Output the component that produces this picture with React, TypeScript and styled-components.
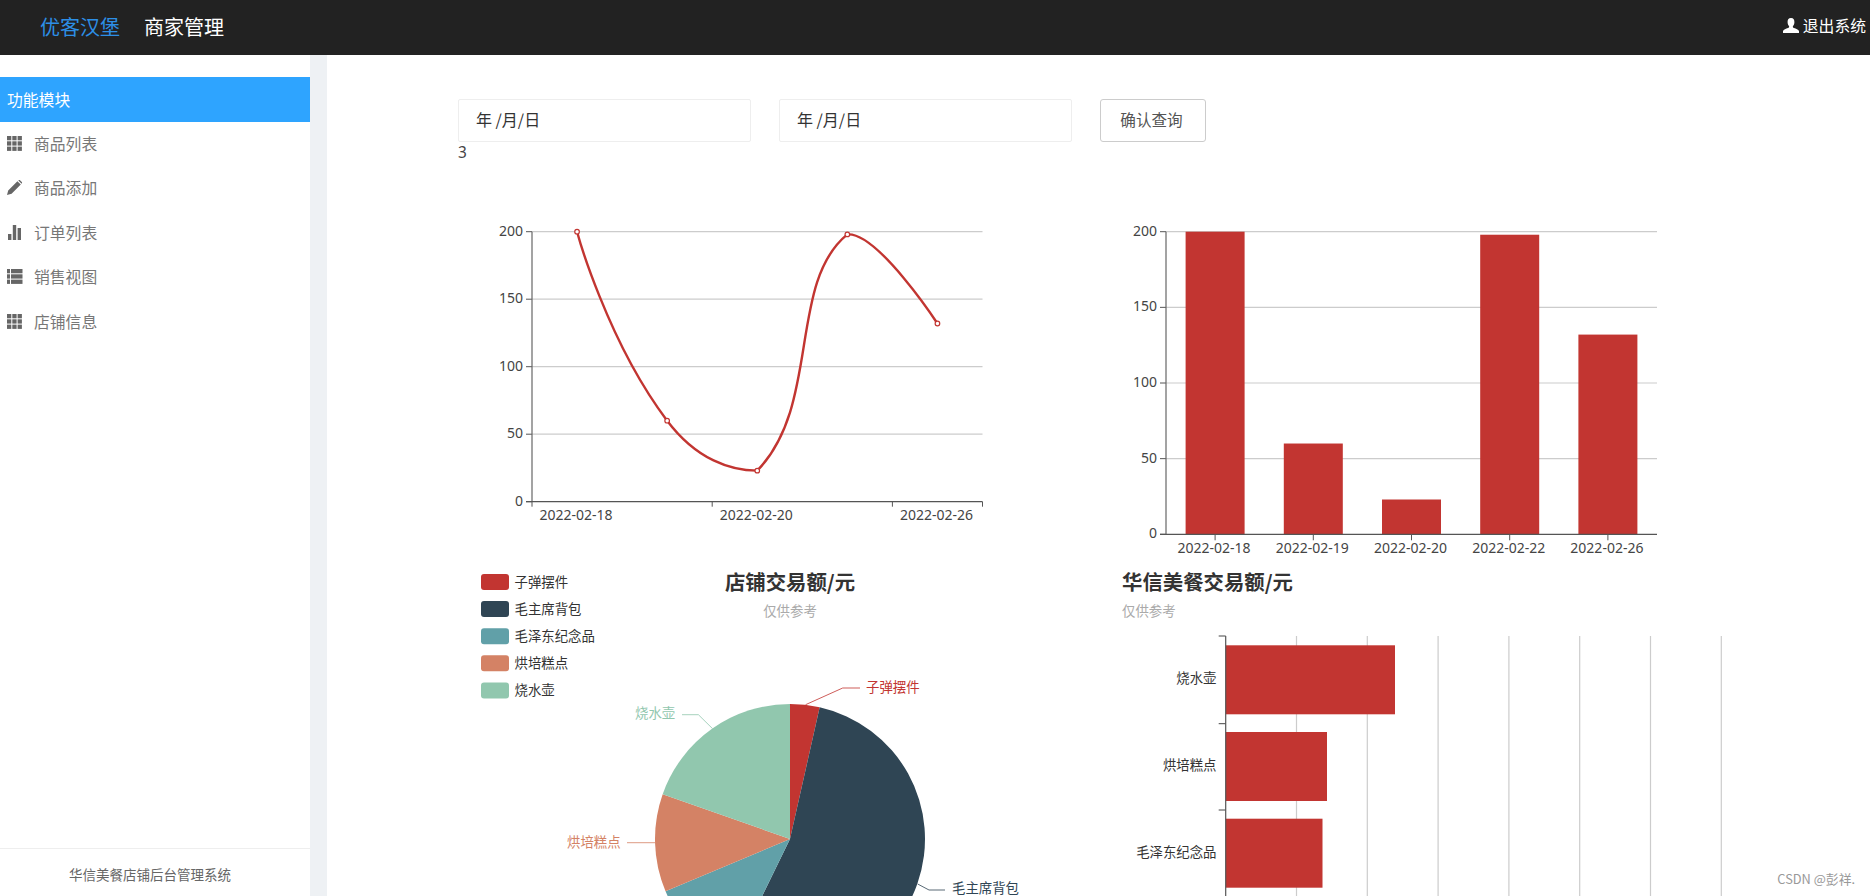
import React from 'react'
import styled, { createGlobalStyle } from 'styled-components'

const FONT = `"Noto Sans CJK SC", "Noto Sans", sans-serif`
const COLORS = ['#c23531', '#2f4554', '#61a0a8', '#d48265', '#91c7ae']

const GlobalStyle = createGlobalStyle`
  html, body {
    margin: 0;
    height: 100%;
    overflow: hidden;
    background: #fff;
    font-family: ${FONT};
  }
`

const Page = styled.div`
  height: 896px;
  display: flex;
  flex-direction: column;
  position: relative;
  overflow: hidden;
`

const Header = styled.header`
  height: 55px;
  flex: none;
  box-sizing: border-box;
  background: #222;
  display: flex;
  align-items: center;
  padding: 0 4px 3px 40px;
`

const Brand = styled.div<{ $accent?: boolean }>`
  font-size: 20px;
  margin-right: 24px;
  color: ${props => (props.$accent ? '#2d8fe6' : '#fff')};
`

const Logout = styled.div`
  margin-left: auto;
  padding-bottom: 2px;
  display: flex;
  align-items: center;
  gap: 4px;
  color: #fff;
  font-size: 15.8px;
`

const Body = styled.div`
  flex: 1;
  display: flex;
  min-height: 0;
`

const Sidebar = styled.aside`
  width: 310px;
  flex: none;
  display: flex;
  flex-direction: column;
  padding-top: 22px;
  box-sizing: border-box;
`

const MenuHead = styled.div`
  height: 45px;
  background: #2ea4ff;
  color: #fff;
  font-size: 15.8px;
  line-height: 45px;
  padding-left: 7px;
`

const MenuItem = styled.div`
  height: 44.5px;
  box-sizing: border-box;
  padding: 0 0 2px 7px;
  display: flex;
  align-items: center;
  gap: 11px;
  color: #777;
  font-size: 15.8px;
`

const SideFooter = styled.div`
  margin-top: auto;
  height: 47px;
  padding-right: 10px;
  border-top: 1px solid #eee;
  color: #666;
  font-size: 13.5px;
  line-height: 50px;
  text-align: center;
`

const Gutter = styled.div`
  width: 17px;
  flex: none;
  background: #eef1f4;
`

const Main = styled.main`
  flex: 1;
  min-width: 0;
  padding: 44px 0 0 131px;
  overflow: hidden;
`

const Toolbar = styled.div`
  display: flex;
  align-items: stretch;
`

const DateInput = styled.input`
  width: 293px;
  height: 43px;
  box-sizing: border-box;
  margin-right: 28px;
  padding: 0 17px 3px;
  border: 1px solid #eee;
  border-radius: 2px;
  outline: none;
  font-family: ${FONT};
  font-size: 16px;
  color: #333;
  background: #fff;
`

const QueryButton = styled.button`
  width: 106px;
  height: 43px;
  border: 1px solid #ccc;
  border-radius: 3px;
  background: #fff;
  color: #555;
  font-family: ${FONT};
  font-size: 15.6px;
  padding: 0 3px 3px 0;
`

const Count = styled.div`
  font-family: "Noto Sans", sans-serif;
  font-size: 15.4px;
  line-height: 22px;
  color: #444;
`

const ChartGrid = styled.div`
  margin-top: 36px;
  display: grid;
  grid-template-columns: 640px 640px;
  grid-template-rows: 360px 340px;
`

const ChartSvg = styled.svg`
  display: block;
  font-family: ${FONT};
`

const Tick = styled.text`
  font-family: "Noto Sans", sans-serif;
  font-size: 14px;
  fill: #444;
`

const Label = styled.text<{ $tone?: string }>`
  font-size: 13.4px;
  fill: ${props => props.$tone || '#333'};
`

const Title = styled.text`
  font-size: 20.4px;
  font-weight: 700;
  fill: #333;
`

const Subtitle = styled.text`
  font-size: 13.4px;
  fill: #aaa;
`

const Watermark = styled.div`
  position: absolute;
  right: 15px;
  bottom: 9px;
  color: #999;
  font-size: 12.8px;
  line-height: 16px;
`

const IconSvg = styled.svg`
  flex: none;
  display: block;
  fill: currentColor;
`

const MenuIcon = styled(IconSvg).attrs({ width: 16, height: 15, viewBox: '0 0 16 15' })`
  color: #666;
`

const GridIcon = () => (
  <MenuIcon>
    {[0, 5.3, 10.6].flatMap(y =>
      [0, 5.3, 10.6].map(x => <rect key={`${x}-${y}`} x={x} y={y} width="4.3" height="4.3" />)
    )}
  </MenuIcon>
)

const PencilIcon = () => (
  <MenuIcon>
    <path d="M0 15 L1.2 10.4 L10.4 1.2 L13.8 4.6 L4.6 13.8 Z M11.3 .4 L12 0 Q12.6-.2 13 .2 L14.8 2 Q15.2 2.4 15 3 L14.6 3.7 Z" />
  </MenuIcon>
)

const StatsIcon = () => (
  <MenuIcon>
    <rect x="1" y="9" width="3.4" height="6" />
    <rect x="5.8" y="0" width="3.4" height="15" />
    <rect x="10.6" y="3" width="3.4" height="12" />
  </MenuIcon>
)

const ListIcon = () => (
  <MenuIcon>
    {[0, 5.3, 10.6].map(y => (
      <g key={y}>
        <rect x="0" y={y} width="3" height="4.3" />
        <rect x="4" y={y} width="11.5" height="4.3" />
      </g>
    ))}
  </MenuIcon>
)

const UserIcon = () => (
  <IconSvg width="16" height="15" viewBox="0 0 16 15">
    <path d="M8 0 C10.6 0 11.6 2 11.4 4.4 C11.3 6 10.6 7.4 9.9 8.2 C9.7 9 10 9.6 11 10 C13 10.8 15.4 11.4 16 13 L16 15 L0 15 L0 13 C.6 11.4 3 10.8 5 10 C6 9.6 6.3 9 6.1 8.2 C5.4 7.4 4.7 6 4.6 4.4 C4.4 2 5.4 0 8 0 Z" />
  </IconSvg>
)

const menu = [
  { text: '商品列表', icon: <GridIcon /> },
  { text: '商品添加', icon: <PencilIcon /> },
  { text: '订单列表', icon: <StatsIcon /> },
  { text: '销售视图', icon: <ListIcon /> },
  { text: '店铺信息', icon: <GridIcon /> },
]

const sales = [
  { date: '2022-02-18', value: 200 },
  { date: '2022-02-19', value: 60 },
  { date: '2022-02-20', value: 23 },
  { date: '2022-02-22', value: 198 },
  { date: '2022-02-26', value: 132 },
]

// same maths as echarts smooth: 0.5, control points kept inside the data range
const smoothPath = (pts: number[][]) => {
  const ys = pts.map(p => p[1])
  const clampY = (y: number) => Math.min(Math.max(y, Math.min(...ys)), Math.max(...ys))
  const cp = pts.map((p, i) => {
    const prev = pts[i - 1]
    const next = pts[i + 1]
    if (!prev || !next) return { before: p, after: p }
    const vx = next[0] - prev[0]
    const vy = next[1] - prev[1]
    const d0 = Math.hypot(p[0] - prev[0], p[1] - prev[1])
    const d1 = Math.hypot(next[0] - p[0], next[1] - p[1])
    const t0 = (0.5 * d0) / (d0 + d1)
    const t1 = (0.5 * d1) / (d0 + d1)
    return {
      before: [p[0] - vx * t0, clampY(p[1] - vy * t0)],
      after: [p[0] + vx * t1, clampY(p[1] + vy * t1)],
    }
  })
  let d = `M${pts[0][0]} ${pts[0][1]}`
  for (let i = 1; i < pts.length; i++) {
    d += ` C${cp[i - 1].after[0]} ${cp[i - 1].after[1]} ${cp[i].before[0]} ${cp[i].before[1]} ${pts[i][0]} ${pts[i][1]}`
  }
  return d
}

const LineChart = () => {
  const left = 532
  const right = 982.5
  const zero = 501.7
  const unit = 1.35
  const step = (right - left) / 5
  const pts = sales.map((s, i) => [left + step * (i + 0.5), zero - s.value * unit])
  return (
    <ChartSvg width="640" height="360" viewBox="458 200 640 360">
      {[0, 50, 100, 150, 200].map(v => {
        const y = zero - v * unit
        return (
          <g key={v}>
            {v > 0 && <line x1={left} x2={right} y1={y} y2={y} stroke="#ccc" strokeWidth="1.2" />}
            <line x1={left - 6} x2={left} y1={y} y2={y} stroke="#555" />
            <Tick x={left - 9} y={y + 4} textAnchor="end">{v}</Tick>
          </g>
        )
      })}
      <line x1={left} x2={left} y1={zero - 200 * unit} y2={zero} stroke="#666" strokeWidth="1.2" />
      <line x1={left - 6} x2={right} y1={zero} y2={zero} stroke="#555" strokeWidth="1.2" />
      {[0, 2, 4, 5].map(n => (
        <line key={n} x1={left + step * n} x2={left + step * n} y1={zero} y2={zero + 5} stroke="#555" />
      ))}
      {[0, 2, 4].map(n => (
        <Tick key={n} x={pts[n][0] - 1} y={zero + 18} textAnchor="middle">{sales[n].date}</Tick>
      ))}
      <path d={smoothPath(pts)} fill="none" stroke={COLORS[0]} strokeWidth="2.4" />
      {pts.map(p => (
        <circle key={p[0]} cx={p[0]} cy={p[1]} r="2.3" fill="#fff" stroke={COLORS[0]} strokeWidth="1.2" />
      ))}
    </ChartSvg>
  )
}

const BarChart = () => {
  const left = 1166
  const right = 1657
  const zero = 534.3
  const unit = 1.513
  const step = (right - left) / 5
  return (
    <ChartSvg width="640" height="360" viewBox="1098 200 640 360">
      {[0, 50, 100, 150, 200].map(v => {
        const y = zero - v * unit
        return (
          <g key={v}>
            {v > 0 && <line x1={left} x2={right} y1={y} y2={y} stroke="#ccc" strokeWidth="1.2" />}
            <line x1={left - 6} x2={left} y1={y} y2={y} stroke="#555" />
            <Tick x={left - 9} y={y + 4} textAnchor="end">{v}</Tick>
          </g>
        )
      })}
      {sales.map((s, i) => {
        const cx = left + step * (i + 0.5)
        return (
          <g key={s.date}>
            <rect x={cx - 29.5} y={zero - s.value * unit} width="59" height={s.value * unit} fill={COLORS[0]} />
            <line x1={cx} x2={cx} y1={zero} y2={zero + 6} stroke="#555" />
            <Tick x={cx - 1} y={zero + 19} textAnchor="middle">{s.date}</Tick>
          </g>
        )
      })}
      <line x1={left} x2={left} y1={zero - 200 * unit} y2={zero} stroke="#666" strokeWidth="1.2" />
      <line x1={left - 6} x2={right} y1={zero} y2={zero} stroke="#555" strokeWidth="1.2" />
    </ChartSvg>
  )
}

const slices = [
  { name: '子弹摆件', from: 0, to: 12.7 },
  { name: '毛主席背包', from: 12.7, to: 206 },
  { name: '毛泽东纪念品', from: 206, to: 247.2 },
  { name: '烘培糕点', from: 247.2, to: 289.4 },
  { name: '烧水壶', from: 289.4, to: 360 },
]

const wedge = (cx: number, cy: number, r: number, from: number, to: number) => {
  const point = (deg: number) => {
    const a = (deg * Math.PI) / 180
    return `${cx + r * Math.sin(a)} ${cy - r * Math.cos(a)}`
  }
  return `M${cx} ${cy} L${point(from)} A${r} ${r} 0 ${to - from > 180 ? 1 : 0} 1 ${point(to)} Z`
}

const pieLabels = [
  { text: '子弹摆件', x: 866, y: 692, tone: 0, line: '805.6,704.7 842.7,688 860,688' },
  { text: '烧水壶', x: 635, y: 718, tone: 4, line: '682,714.7 698.4,714.7 712.6,728.7' },
  { text: '烘培糕点', x: 567, y: 847, tone: 3, line: '627,842.7 655,842.7' },
  { text: '毛主席背包', x: 952, y: 893, tone: 1, line: '917.7,884 929,890 945,890' },
]

const PieChart = () => (
  <ChartSvg width="640" height="340" viewBox="458 560 640 340">
    {slices.map((s, i) => (
      <g key={s.name}>
        <rect x="481" y={574 + i * 27.1} width="28" height="16" rx="3" fill={COLORS[i]} />
        <Label x="514.5" y={587 + i * 27.1}>{s.name}</Label>
      </g>
    ))}
    <Title x="790" y="590" textAnchor="middle">店铺交易额/元</Title>
    <Subtitle x="790" y="616" textAnchor="middle">仅供参考</Subtitle>
    {slices.map((s, i) => (
      <path key={s.name} d={wedge(790, 839, 135, s.from, s.to)} fill={COLORS[i]} />
    ))}
    {pieLabels.map(l => (
      <g key={l.text}>
        <polyline points={l.line} fill="none" stroke={COLORS[l.tone]} strokeOpacity="0.8" />
        <Label x={l.x} y={l.y} $tone={COLORS[l.tone]}>{l.text}</Label>
      </g>
    ))}
  </ChartSvg>
)

const goods = [
  { name: '烧水壶', top: 645.3, end: 1395, mid: 678 },
  { name: '烘培糕点', top: 732, end: 1327, mid: 765 },
  { name: '毛泽东纪念品', top: 818.7, end: 1322.5, mid: 852 },
]

const HBarChart = () => {
  const left = 1225.7
  return (
    <ChartSvg width="640" height="340" viewBox="1098 560 640 340">
      <Title x="1122" y="590">华信美餐交易额/元</Title>
      <Subtitle x="1122" y="616">仅供参考</Subtitle>
      {[1, 2, 3, 4, 5, 6, 7].map(n => (
        <line key={n} x1={left + n * 70.8} x2={left + n * 70.8} y1="636" y2="900" stroke="#ccc" strokeWidth="1.2" />
      ))}
      {goods.map(g => (
        <g key={g.name}>
          <rect x={left} y={g.top} width={g.end - left} height="69" fill={COLORS[0]} />
          <Label x="1216.5" y={g.mid + 5} textAnchor="end">{g.name}</Label>
        </g>
      ))}
      {[636, 723.7, 810].map(y => (
        <line key={y} x1={left - 7} x2={left} y1={y} y2={y} stroke="#444" />
      ))}
      <line x1={left} x2={left} y1="636" y2="900" stroke="#555" strokeWidth="1.2" />
    </ChartSvg>
  )
}

export default function App() {
  return (
    <Page>
      <GlobalStyle />
      <Header>
        <Brand $accent>优客汉堡</Brand>
        <Brand>商家管理</Brand>
        <Logout>
          <UserIcon />
          退出系统
        </Logout>
      </Header>
      <Body>
        <Sidebar>
          <MenuHead>功能模块</MenuHead>
          {menu.map(item => (
            <MenuItem key={item.text}>
              {item.icon}
              {item.text}
            </MenuItem>
          ))}
          <SideFooter>华信美餐店铺后台管理系统</SideFooter>
        </Sidebar>
        <Gutter />
        <Main>
          <Toolbar>
            <DateInput readOnly value="年 /月/日" />
            <DateInput readOnly value="年 /月/日" />
            <QueryButton>确认查询</QueryButton>
          </Toolbar>
          <Count>3</Count>
          <ChartGrid>
            <LineChart />
            <BarChart />
            <PieChart />
            <HBarChart />
          </ChartGrid>
        </Main>
      </Body>
      <Watermark>CSDN @彭祥.</Watermark>
    </Page>
  )
}
